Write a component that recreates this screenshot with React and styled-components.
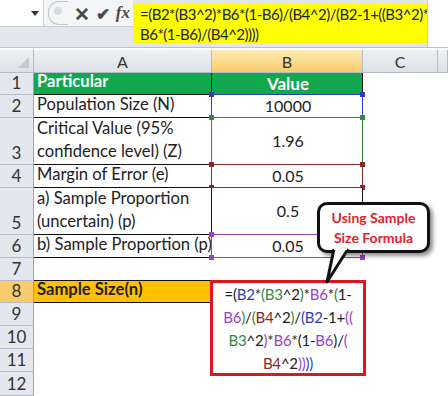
import styled, { createGlobalStyle } from "styled-components";

const Global = createGlobalStyle`
	body {
		margin: 0;
		background: #fff;
		font-family: Lato, "Open Sans", sans-serif;
		color: #222;
	}
`;

const Page = styled.div`
	position: relative;
	width: 448px;
	height: 396px;
	overflow: hidden;
	background: #fff;
`;

const TopBar = styled.div`
	display: flex;
	height: 48px;
	background: #e3e7ed;
	border-bottom: 1px solid #b9c1cc;
	box-sizing: border-box;
`;

const LeftTools = styled.div`
	width: 133px;
	display: flex;
	flex-direction: column;
`;

const ToolRow = styled.div`
	display: flex;
	align-items: center;
	height: 26px;
	background: #f4f5f7;
	border-bottom: 1px solid #c9ced6;
`;

const NameBox = styled.div`
	width: 45px;
	height: 26px;
	background: #fff;
	display: flex;
	align-items: center;
	justify-content: flex-end;
	padding-right: 4px;
	box-sizing: border-box;
	border-right: 1px solid #d0d4da;
`;

const Pill = styled.div`
	width: 20px;
	height: 22px;
	margin: 0 4px;
	border: 1px solid #c3c8cf;
	border-right: none;
	border-radius: 11px 0 0 11px;
	display: flex;
	align-items: center;
	justify-content: center;
`;

const Dot = styled.div`
	width: 8px;
	height: 8px;
	border-radius: 50%;
	background: #d8dce2;
	margin-top: -5px;
`;

const Icon = styled.span`
	display: inline-flex;
	width: 21px;
	justify-content: center;
	font-size: ${(p) => p.size || 17}px;
	color: #4a4a4a;
	font-weight: bold;
	font-family: ${(p) => (p.serif ? '"Liberation Serif", serif' : "inherit")};
	font-style: ${(p) => (p.serif ? "italic" : "normal")};
`;

const Formula = styled.div`
	width: 294px;
	height: 41px;
	margin-top: 3px;
	background: #ffff00;
	font-size: 15px;
	letter-spacing: -0.5px;
	line-height: 20px;
	padding: 1px 0 0 7px;
	box-sizing: border-box;
	color: #222;
	white-space: nowrap;
`;

const FillerWhite = styled.div`
	flex: 1;
	background: #fff;
	border-left: 1px solid #c9ced6;
`;

const Sheet = styled.div`
	display: grid;
	margin-top: 2px;
	grid-template-columns: 34px 178px 151px 75px 1fr;
	grid-template-rows: 23px 22px 23px 47px 23px 47px 23px 23px 22px 23px 23px 23px 24px;
`;

const ColHead = styled.div`
	display: flex;
	align-items: center;
	justify-content: center;
	font-size: 16px;
	color: #333;
	border-right: 1px solid #b4bcc7;
	border-bottom: 1px solid #b4bcc7;
	background: ${(p) =>
		p.active
			? "linear-gradient(#fdecb6, #f8cb66)"
			: "linear-gradient(#eef0f3, #dde1e7)"};
`;

const Corner = styled(ColHead)`
	justify-content: flex-end;
	align-items: flex-end;
	padding: 0 4px 4px 0;
`;

const RowHead = styled.div`
	display: flex;
	align-items: flex-end;
	justify-content: center;
	padding-bottom: 1px;
	font-size: 17px;
	color: #333;
	background: ${(p) => (p.active ? "#f9cb6c" : "#e4e8ee")};
	border-bottom: 1px solid #b4bcc7;
	border-right: 1px solid #9aa3ae;
	box-sizing: border-box;
`;

const Cell = styled.div`
	position: relative;
	display: flex;
	align-items: ${(p) => (p.center ? "center" : "flex-end")};
	justify-content: ${(p) => (p.center ? "center" : "flex-start")};
	padding: 0 1px 1px 3px;
	font-size: ${(p) => (p.center ? 16 : 16.6)}px;
	line-height: 23px;
	box-sizing: border-box;
	white-space: ${(p) => (p.wrap ? "normal" : "nowrap")};
	background: ${(p) => p.bg || "#fff"};
	color: ${(p) => p.fg || "#222"};
	font-weight: ${(p) => (p.bold ? 700 : 400)};
	border-right: ${(p) => (p.lines ? "1px solid #111" : "none")};
	border-bottom: ${(p) => (p.lines ? "1px solid #111" : "none")};
`;

const Highlight = styled.div`
	position: absolute;
	inset: -1px -1px -1px -1px;
	border: 1px solid ${(p) => p.color};
	pointer-events: none;
`;

const Handle = styled.span`
	position: absolute;
	width: 5px;
	height: 5px;
	background: ${(p) => p.color};
	${(p) => (p.top ? "top: -3px;" : "bottom: -3px;")}
	${(p) => (p.left ? "left: -3px;" : "right: -3px;")}
`;

const Blank = styled.div`
	background: #fff;
`;

const FormulaCell = styled.div`
	grid-column: 3;
	grid-row: span 4;
	margin: -1px -3px -4px -2px;
	border: 3px solid #e3151c;
	background: #fff;
	font-size: 15px;
	letter-spacing: -0.2px;
	line-height: 23px;
	text-align: center;
	z-index: 1;
`;

const Seg = styled.span`
	color: ${(p) => p.c};
`;

const Callout = styled.div`
	position: absolute;
	left: 317px;
	top: 202px;
	width: 113px;
	height: 51px;
	box-sizing: border-box;
	border: 3px solid #111;
	border-radius: 10px;
	background: #fff;
	box-shadow: 3px 3px 4px rgba(0, 0, 0, 0.45);
	display: flex;
	align-items: center;
	justify-content: center;
	text-align: center;
	color: #e8202a;
	font-weight: 700;
	font-size: 14px;
	line-height: 20px;
	z-index: 3;
`;

const Tail = styled.svg`
	position: absolute;
	left: 322px;
	top: 247px;
	z-index: 4;
`;

const K = "#222";
const B = "#2b3dc2";
const G = "#2f8a3c";
const P = "#9a3fc9";
const R = "#8a2626";

const formulaLines = [
	[["=(", K], ["B2", B], ["*", K], ["(", G], ["B3", G], ["^2", K], [")", G], ["*", K], ["B6", P], ["*", K], ["(", G], ["1-", K]],
	[["B6", P], [")", G], ["/", K], ["(", G], ["B4", R], ["^2", K], [")", G], ["/", K], ["(", B], ["B2", B], ["-1+", K], ["((", P]],
	[["B3", G], ["^2", K], [")", P], ["*", K], ["B6", P], ["*", K], ["(1-", K], ["B6", P], [")", K], ["/", K], ["(", P]],
	[["B4", R], ["^2", K], ["))", P], ["))", B]],
];

const rows = [
	{ n: 1, a: "Particular", b: "Value", head: true },
	{ n: 2, a: "Population Size (N)", b: "10000", hl: B },
	{ n: 3, a: "Critical Value (95% confidence level) (Z)", b: "1.96", hl: G, wrap: true },
	{ n: 4, a: "Margin of Error (e)", b: "0.05", hl: R },
	{ n: 5, a: "a) Sample Proportion (uncertain) (p)", b: "0.5", wrap: true },
	{ n: 6, a: "b) Sample Proportion (p)", b: "0.05", hl: P },
];

function Marked({ color }) {
	return (
		<Highlight color={color}>
			<Handle color={color} top left />
			<Handle color={color} top />
			<Handle color={color} left />
			<Handle color={color} />
		</Highlight>
	);
}

export default function App() {
	return (
		<Page>
			<Global />
			<TopBar>
				<LeftTools>
					<ToolRow>
						<NameBox>
							<svg width="8" height="5"><path d="M0 0h8L4 5z" fill="#333" /></svg>
						</NameBox>
						<Pill><Dot /></Pill>
						<Icon size={19}>✕</Icon>
						<Icon>✔</Icon>
						<Icon serif size={17}>fx</Icon>
					</ToolRow>
				</LeftTools>
				<Formula>
					=(B2*(B3^2)*B6*(1-B6)/(B4^2)/(B2-1+((B3^2)*
					<br />
					B6*(1-B6)/(B4^2))))
				</Formula>
				<FillerWhite />
			</TopBar>

			<Sheet>
				<Corner>
					<svg width="11" height="11"><path d="M11 0v11H0z" fill="#c4c9d0" /></svg>
				</Corner>
				<ColHead>A</ColHead>
				<ColHead active>B</ColHead>
				<ColHead>C</ColHead>
				<ColHead />

				{rows.map((r) => (
					<>
						<RowHead key={"h" + r.n}>{r.n}</RowHead>
						{r.head ? (
							<>
								<Cell lines bg="#11a84e" fg="#fff" bold>{r.a}</Cell>
								<Cell lines bg="#11a84e" fg="#fff" bold center style={{ fontSize: 17 }}>{r.b}</Cell>
							</>
						) : (
							<>
								<Cell lines wrap={r.wrap}>{r.a}</Cell>
								<Cell lines center>
									{r.b}
									{r.hl && <Marked color={r.hl} />}
								</Cell>
							</>
						)}
						<Blank />
						<Blank />
					</>
				))}

				<RowHead>7</RowHead>
				<Blank />
				<Blank />
				<Blank />
				<Blank />

				<RowHead active>8</RowHead>
				<Cell lines bold bg="#ffc000" style={{ borderRight: "none", borderTop: "1px solid #111", marginTop: -1 }}>Sample Size(n)</Cell>
				<FormulaCell>
					{formulaLines.map((line, i) => (
						<div key={i}>
							{line.map(([t, c], j) => (
								<Seg key={j} c={c}>{t}</Seg>
							))}
						</div>
					))}
				</FormulaCell>
				<Blank />
				<Blank />

				{[9, 10, 11, 12].map((n) => (
					<>
						<RowHead key={n}>{n}</RowHead>
						<Blank />
						{n === 12 && <Blank />}
						<Blank />
						<Blank />
					</>
				))}
			</Sheet>

			<Callout>
				Using Sample
				<br />
				Size Formula
			</Callout>
			<Tail width="34" height="38" viewBox="0 0 34 38">
				<path d="M12 2 L5 35 L26 2" fill="#fff" stroke="#111" strokeWidth="3" strokeLinejoin="round" />
				<rect x="12" y="0" width="13" height="3" fill="#fff" />
			</Tail>
		</Page>
	);
}
